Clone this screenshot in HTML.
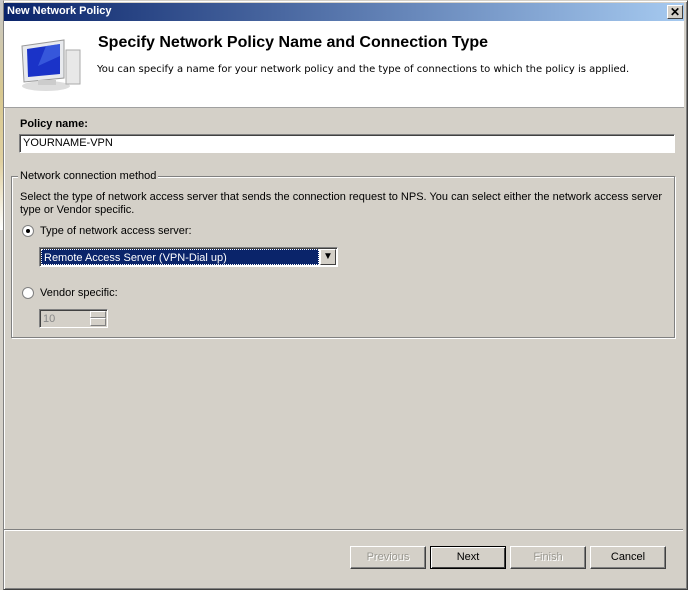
<!DOCTYPE html>
<html><head><style>
*{margin:0;padding:0;box-sizing:border-box}
body{width:688px;height:590px;background:#d4d0c8;position:relative;overflow:hidden;font-family:"Liberation Sans",sans-serif;font-size:11px;color:#000}
.a{position:absolute}
.btn{position:absolute;top:546px;width:76px;height:23px;border:1px solid;border-color:#fff #404040 #404040 #fff;box-shadow:inset -1px -1px #808080;text-align:center;line-height:21px;font-size:11px}
.dis{color:#9a9890;text-shadow:1px 1px #fff}
</style></head><body>
<div class="a" style="left:0;top:0;width:4px;height:230px;background:linear-gradient(#c8c8c8,#d8c890 40%,#e0d0a0 70%,#fff)"></div>
<div class="a" style="left:3px;top:0;width:685px;height:590px;border:1px solid;border-color:#d4d0c8 #404040 #404040 #808080;box-shadow:inset 1px 1px #fff,inset -1px -1px #808080"></div>
<div class="a" style="left:4px;top:3px;width:680px;height:18px;background:linear-gradient(to right,#0a246a,#a6caf0)"></div>
<div class="a" style="left:7px;top:5px;color:#fff;font-weight:bold;font-size:11px">New Network Policy</div>
<div class="a" style="left:667px;top:5px;width:16px;height:14px;background:#d4d0c8;border:1px solid;border-color:#fff #404040 #404040 #fff;font-size:12px;line-height:12px;text-align:center;font-weight:bold">✕</div>
<div class="a" style="left:4px;top:21px;width:680px;height:87px;background:#fff;border-bottom:1px solid #a0a0a0"></div>
<svg class="a" style="left:16px;top:36px" width="68" height="58">
<ellipse cx="30" cy="50" rx="24" ry="5" fill="#ddd"/>
<rect x="50" y="14" width="14" height="34" fill="#e8e8e8" stroke="#aaa"/>
<polygon points="6,10 48,4 48,42 8,46" fill="#e8eaee" stroke="#999"/>
<polygon points="11,13 44,8 44,38 12,41" fill="#1a33c8"/>
<polygon points="30,10 44,8 44,20 22,30" fill="#4a70e8" opacity=".6"/>
<rect x="22" y="44" width="18" height="5" fill="#ccc"/>
</svg>
<div class="a" style="left:98px;top:34px;font-size:16px;font-weight:bold">Specify Network Policy Name and Connection Type</div>
<div class="a" style="left:97px;top:64px;font-family:'DejaVu Sans',sans-serif;font-size:10px">You can specify a name for your network policy and the type of connections to which the policy is applied.</div>
<div class="a" style="left:20px;top:118px;font-weight:bold">Policy name:</div>
<div class="a" style="left:19px;top:134px;width:656px;height:19px;background:#fff;border:1px solid;border-color:#808080 #fff #fff #808080;box-shadow:inset 1px 1px #404040;padding:2px 3px;line-height:13px">YOURNAME-VPN</div>
<div class="a" style="left:11px;top:176px;width:664px;height:162px;border:1px solid #808080;box-shadow:1px 1px #fff,inset 1px 1px #fff"></div>
<div class="a" style="left:18px;top:170px;background:#d4d0c8;padding:0 2px">Network connection method</div>
<div class="a" style="left:20px;top:191px;line-height:13px">Select the type of network access server that sends the connection request to NPS. You can select either the network access server<br>type or Vendor specific.</div>
<div class="a" style="left:22px;top:225px;width:12px;height:12px;border-radius:50%;background:#fff;border:1px solid #808080"><div style="margin:3px;width:4px;height:4px;border-radius:50%;background:#000"></div></div>
<div class="a" style="left:40px;top:225px">Type of network access server:</div>
<div class="a" style="left:39px;top:247px;width:299px;height:20px;background:#fff;border:1px solid;border-color:#808080 #fff #fff #808080;box-shadow:inset 1px 1px #404040"></div>
<div class="a" style="left:41px;top:249px;width:278px;height:16px;background:#0a246a;color:#fff;padding-left:2px;line-height:16px;border:1px dotted #fff">Remote Access Server (VPN-Dial up)</div>
<div class="a" style="left:320px;top:249px;width:16px;height:16px;background:#d4d0c8;border:1px solid;border-color:#fff #404040 #404040 #fff;font-size:10px;text-align:center;line-height:14px">▼</div>
<div class="a" style="left:22px;top:287px;width:12px;height:12px;border-radius:50%;background:#fff;border:1px solid #808080"></div>
<div class="a" style="left:40px;top:287px">Vendor specific:</div>
<div class="a" style="left:39px;top:309px;width:69px;height:19px;border:1px solid;border-color:#808080 #fff #fff #808080;box-shadow:inset 1px 1px #404040;color:#888;padding:3px 3px;line-height:12px">10</div>
<div class="a" style="left:90px;top:311px;width:16px;height:7px;border:1px solid;border-color:#fff #808080 #808080 #fff"></div>
<div class="a" style="left:90px;top:318px;width:16px;height:8px;border:1px solid;border-color:#fff #808080 #808080 #fff"></div>
<div class="a" style="left:4px;top:529px;width:679px;height:2px;border-top:1px solid #808080;border-bottom:1px solid #fff"></div>
<div class="btn dis" style="left:350px">Previous</div>
<div class="btn" style="left:430px;border:1px solid #000;box-shadow:inset 1px 1px #fff,inset -1px -1px #404040">Next</div>
<div class="btn dis" style="left:510px">Finish</div>
<div class="btn" style="left:590px">Cancel</div>
</body></html>
